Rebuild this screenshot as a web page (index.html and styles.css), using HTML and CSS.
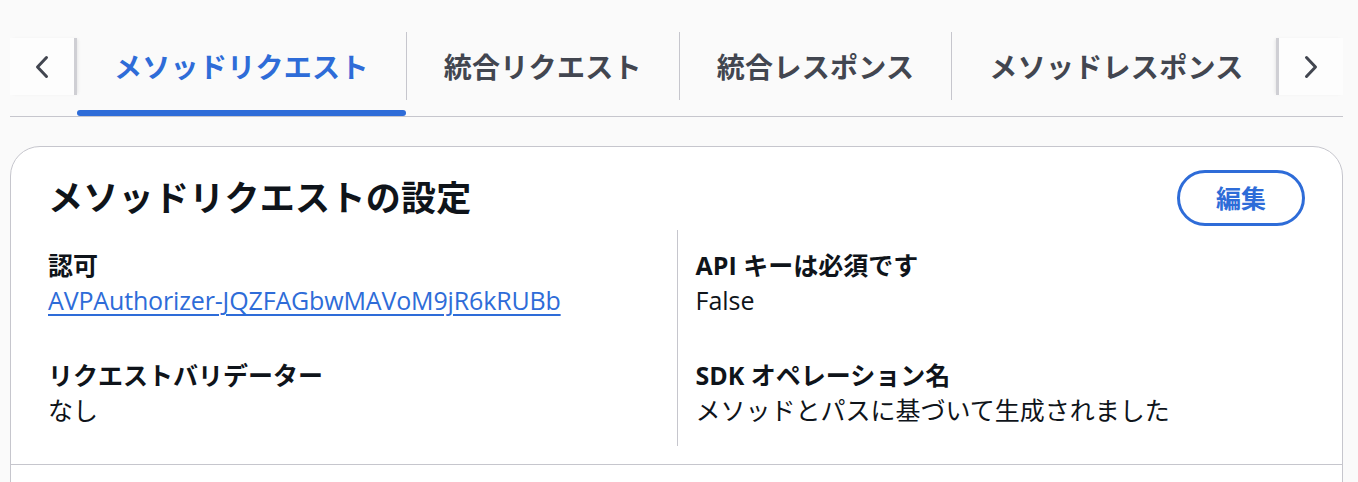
FILE: index.html
```html
<!DOCTYPE html>
<html lang="ja">
<head>
<meta charset="utf-8">
<title>メソッドリクエスト</title>
<link rel="stylesheet" href="styles.css">
</head>
<body>
<div class="page">
  <div class="tabs-header">
    <button class="scroll-btn scroll-left" aria-label="前へ">
      <svg width="14" height="24" viewBox="0 0 14 24"><path d="M11.5 2.5 L2.5 12 L11.5 21.5" /></svg>
    </button>
    <div class="tab-list">
      <div class="tab active"><span class="tab-label">メソッドリクエスト</span></div>
      <div class="tab"><span class="tab-label sep">統合リクエスト</span></div>
      <div class="tab"><span class="tab-label sep">統合レスポンス</span></div>
      <div class="tab"><span class="tab-label sep">メソッドレスポンス</span></div>
    </div>
    <button class="scroll-btn scroll-right" aria-label="次へ">
      <svg width="14" height="24" viewBox="0 0 14 24"><path d="M2.5 2.5 L11.5 12 L2.5 21.5" /></svg>
    </button>
  </div>

  <div class="card">
    <div class="card-header">
      <h2 class="card-title">メソッドリクエストの設定</h2>
      <button class="btn">編集</button>
    </div>
    <div class="columns">
      <div class="col">
        <div class="kv">
          <div class="key">認可</div>
          <div class="val"><a class="link" href="#">AVPAuthorizer-JQZFAGbwMAVoM9jR6kRUBb</a></div>
        </div>
        <div class="kv">
          <div class="key">リクエストバリデーター</div>
          <div class="val">なし</div>
        </div>
      </div>
      <div class="col col-divided">
        <div class="kv">
          <div class="key">API キーは必須です</div>
          <div class="val">False</div>
        </div>
        <div class="kv">
          <div class="key">SDK オペレーション名</div>
          <div class="val">メソッドとパスに基づいて生成されました</div>
        </div>
      </div>
    </div>
    <div class="card-footer"></div>
  </div>
</div>
</body>
</html>
```

FILE: styles.css
```css
html, body {
  margin: 0;
  padding: 0;
  background: #fafafa;
}

body {
  font-family: "Open Sans", "Noto Sans CJK JP", sans-serif;
  color: #0f141a;
}

.page {
  padding: 0 15px 0 10px;
}

/* ---------- Tabs ---------- */
.tabs-header {
  display: flex;
  align-items: flex-start;
  padding-top: 32px;
  border-bottom: 1px solid #c6c6cd;
}

.scroll-btn {
  margin-top: 6px;
  height: 57px;
  width: 67px;
  flex: none;
  display: flex;
  align-items: center;
  justify-content: center;
  background: #fdfdfd;
  border: none;
  padding: 0;
  cursor: pointer;
}

.scroll-btn svg path {
  fill: none;
  stroke: #424650;
  stroke-width: 3;
  stroke-linecap: round;
  stroke-linejoin: round;
}

.scroll-left {
  border-right: 3px solid #cfcfd4;
  box-shadow: 2px 0 3px -1px rgba(0, 0, 0, 0.08);
}

.scroll-right {
  border-left: 3px solid #cfcfd4;
  box-shadow: -2px 0 3px -1px rgba(0, 0, 0, 0.08);
}

.tab-list {
  flex: 1;
  min-width: 0;
  display: flex;
  overflow: hidden;
}

.tab {
  flex: none;
  display: flex;
  flex-direction: column;
}

.tab::after {
  content: "";
  display: block;
  height: 6px;
  margin-top: 10px;
  border-radius: 3px;
  background: transparent;
}

.tab.active::after {
  background: #2e6cd8;
}

.tab-label {
  height: 68px;
  display: flex;
  align-items: center;
  padding: 0 37px;
  font-size: 28px;
  font-weight: 700;
  letter-spacing: 0.3px;
  color: #424650;
  white-space: nowrap;
}

.tab.active .tab-label {
  color: #2e6cd8;
}

.tab-label.sep {
  border-left: 1px solid #c6c6cd;
}

/* ---------- Card ---------- */
.card {
  margin-top: 29px;
  background: #ffffff;
  border: 1px solid #c6c6cd;
  border-radius: 30px;
}

.card-header {
  display: flex;
  align-items: center;
  justify-content: space-between;
  padding: 23px 37px 0 37px;
}

.card-title {
  margin: 0;
  font-size: 35px;
  line-height: 42px;
  font-weight: 700;
  letter-spacing: 0.3px;
  color: #0f141a;
}

.btn {
  height: 56px;
  padding: 0 36px;
  border: 3px solid #2e6cd8;
  border-radius: 28px;
  background: #ffffff;
  color: #2e6cd8;
  font-family: "Open Sans", "Noto Sans CJK JP", sans-serif;
  font-size: 25px;
  font-weight: 700;
  line-height: 1;
  cursor: pointer;
}

.columns {
  display: grid;
  grid-template-columns: 1fr 1fr;
  padding: 4px 37px 18px 37px;
}

.col {
  display: flex;
  flex-direction: column;
  gap: 40px;
  padding: 18px 0;
}

.col-divided {
  border-left: 1px solid #c6c6cd;
  padding-left: 18px;
}

.kv {
  display: flex;
  flex-direction: column;
}

.key {
  font-size: 25px;
  line-height: 35px;
  font-weight: 700;
  color: #0f141a;
}

.val {
  font-size: 25px;
  line-height: 35px;
  color: #0f141a;
}

.link {
  color: #2e6cd8;
  letter-spacing: -0.15px;
  text-decoration: underline;
  text-decoration-thickness: 2px;
  text-underline-offset: 4px;
}

.card-footer {
  border-top: 1px solid #c6c6cd;
  height: 80px;
}
```
